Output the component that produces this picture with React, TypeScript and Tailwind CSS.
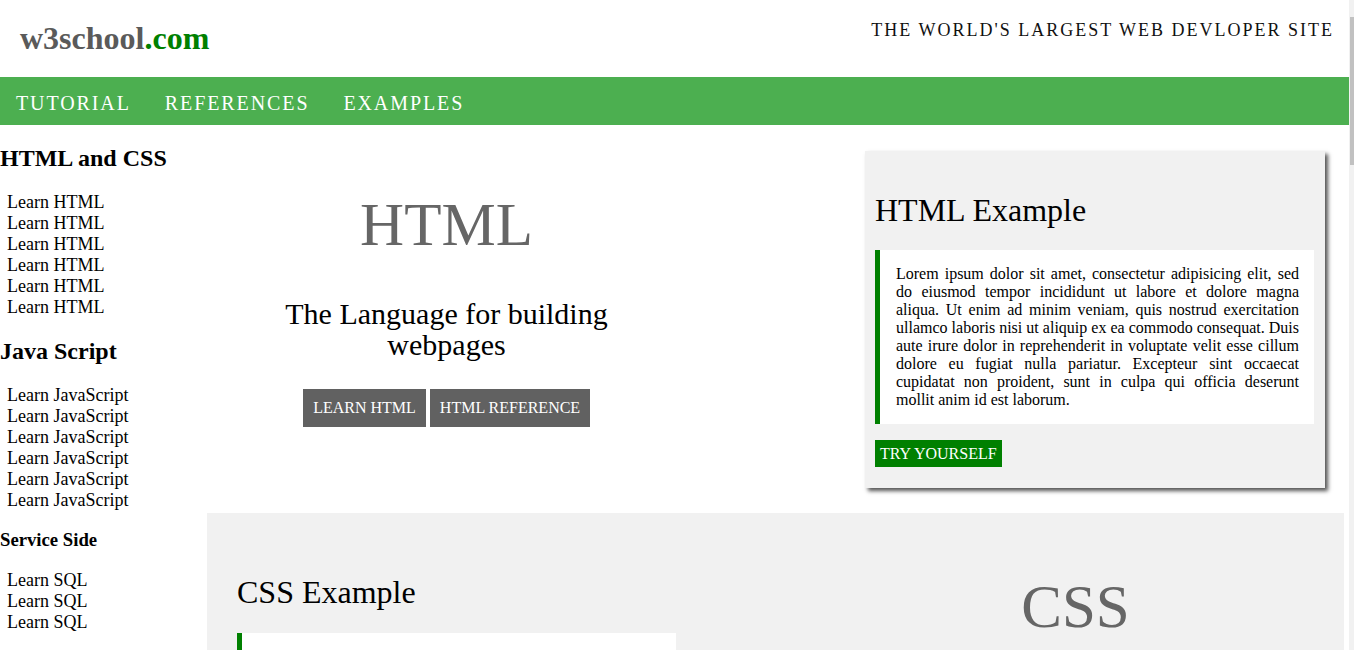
import React from "react";

const LOREM =
  "Lorem ipsum dolor sit amet, consectetur adipisicing elit, sed do eiusmod tempor incididunt ut labore et dolore magna aliqua. Ut enim ad minim veniam, quis nostrud exercitation ullamco laboris nisi ut aliquip ex ea commodo consequat. Duis aute irure dolor in reprehenderit in voluptate velit esse cillum dolore eu fugiat nulla pariatur. Excepteur sint occaecat cupidatat non proident, sunt in culpa qui officia deserunt mollit anim id est laborum.";

function SideList({ items }: { items: string[] }) {
  return (
    <ul className="pl-[7px] text-[18px] leading-[21px] text-black">
      {items.map((t, i) => (
        <li key={i}>{t}</li>
      ))}
    </ul>
  );
}

function ExampleCard({ title, shadow }: { title: string; shadow: boolean }) {
  return (
    <div
      className={
        "w-[460px] bg-[#f1f1f1] pl-[10px] pr-[11px] pt-[42px] pb-[21px] " +
        (shadow ? "shadow-[3px_3px_4px_#555555]" : "")
      }
    >
      <h2 className="text-[32px] leading-[34px] text-black">{title}</h2>
      <div
        className={
          "w-[439px] bg-white border-l-[5px] border-[#008000] pl-[16px] pr-[15px] pb-[15px] " +
          (shadow ? "mt-[23px] pt-[15px]" : "mt-[24px] pt-[20px]")
        }
      >
        <p className="text-[16px] leading-[18px] text-justify text-black">{LOREM}</p>
      </div>
      <button className="mt-[16px] h-[27px] px-[5px] bg-[#008000] text-white text-[16px] leading-[27px]">
        TRY YOURSELF
      </button>
    </div>
  );
}

export default function App() {
  return (
    <div
      className="flex w-[1354px] h-[650px] overflow-hidden bg-white"
      style={{ fontFamily: '"Liberation Serif", "Times New Roman", serif' }}
    >
      <div className="w-[1349px] shrink-0">
        {/* header */}
        <header className="h-[77px] flex justify-between items-start">
          <div className="ml-[20px] mt-[20px] text-[32px] leading-[36px] font-bold text-[#5a5a5a]">
            w3school<span className="text-[#008000]">.com</span>
          </div>
          <div className="mr-[15px] mt-[20px] text-[18px] leading-[20px] tracking-[2px] text-[#111]">
            THE WORLD'S LARGEST WEB DEVLOPER SITE
          </div>
        </header>

        {/* nav */}
        <nav className="h-[48px] bg-[#4caf50] flex text-white text-[20px] leading-[22px] tracking-[1.9px]">
          <a className="pl-[16px] pr-[17px] pt-[15px]">TUTORIAL</a>
          <a className="px-[17px] pt-[15px]">REFERENCES</a>
          <a className="px-[17px] pt-[15px]">EXAMPLES</a>
        </nav>

        <div className="flex">
          {/* sidebar */}
          <aside className="w-[207px] shrink-0">
            <h2 className="mt-[19px] text-[24px] leading-[28px] font-bold">HTML and CSS</h2>
            <div className="mt-[20px]">
              <SideList items={["Learn HTML", "Learn HTML", "Learn HTML", "Learn HTML", "Learn HTML", "Learn HTML"]} />
            </div>
            <h2 className="mt-[19px] text-[24px] leading-[28px] font-bold">Java Script</h2>
            <div className="mt-[20px]">
              <SideList
                items={[
                  "Learn JavaScript",
                  "Learn JavaScript",
                  "Learn JavaScript",
                  "Learn JavaScript",
                  "Learn JavaScript",
                  "Learn JavaScript",
                ]}
              />
            </div>
            <h3 className="mt-[18px] text-[18.72px] leading-[22px] font-bold">Service Side</h3>
            <div className="mt-[19px]">
              <SideList items={["Learn SQL", "Learn SQL", "Learn SQL"]} />
            </div>
          </aside>

          {/* main */}
          <main className="flex-1">
            <div className="flex items-start">
              <div className="w-[479px] shrink-0 flex flex-col items-center text-center">
                <div className="mt-[70px] text-[61px] leading-[60px] text-[#666]">HTML</div>
                <p className="mt-[43px] w-[340px] text-[30px] leading-[31px] text-black">
                  The Language for building webpages
                </p>
                <div className="mt-[29px] flex gap-[4px]">
                  <button className="w-[123px] h-[38px] bg-[#616161] text-white text-[16px]">LEARN HTML</button>
                  <button className="w-[160px] h-[38px] bg-[#616161] text-white text-[16px]">HTML REFERENCE</button>
                </div>
              </div>
              <div className="ml-[179px] mt-[26px]">
                <ExampleCard title="HTML Example" shadow />
              </div>
            </div>

            <section className="mt-[25px] mr-[5px] bg-[#f1f1f1] flex items-start pb-[40px]">
              <div className="ml-[20px] mt-[20px]">
                <ExampleCard title="CSS Example" shadow={false} />
              </div>
              <div className="ml-[149px] w-[479px] mt-[64px] text-center text-[61px] leading-[60px] text-[#666]">
                CSS
              </div>
            </section>
          </main>
        </div>
      </div>

      {/* scrollbar strip */}
      <div className="w-[5px] h-[650px] bg-[#f1f1f1] shrink-0 relative">
        <div className="absolute left-[1px] top-[17px] w-[4px] h-[148px] bg-[#c1c1c1]" />
      </div>
    </div>
  );
}
